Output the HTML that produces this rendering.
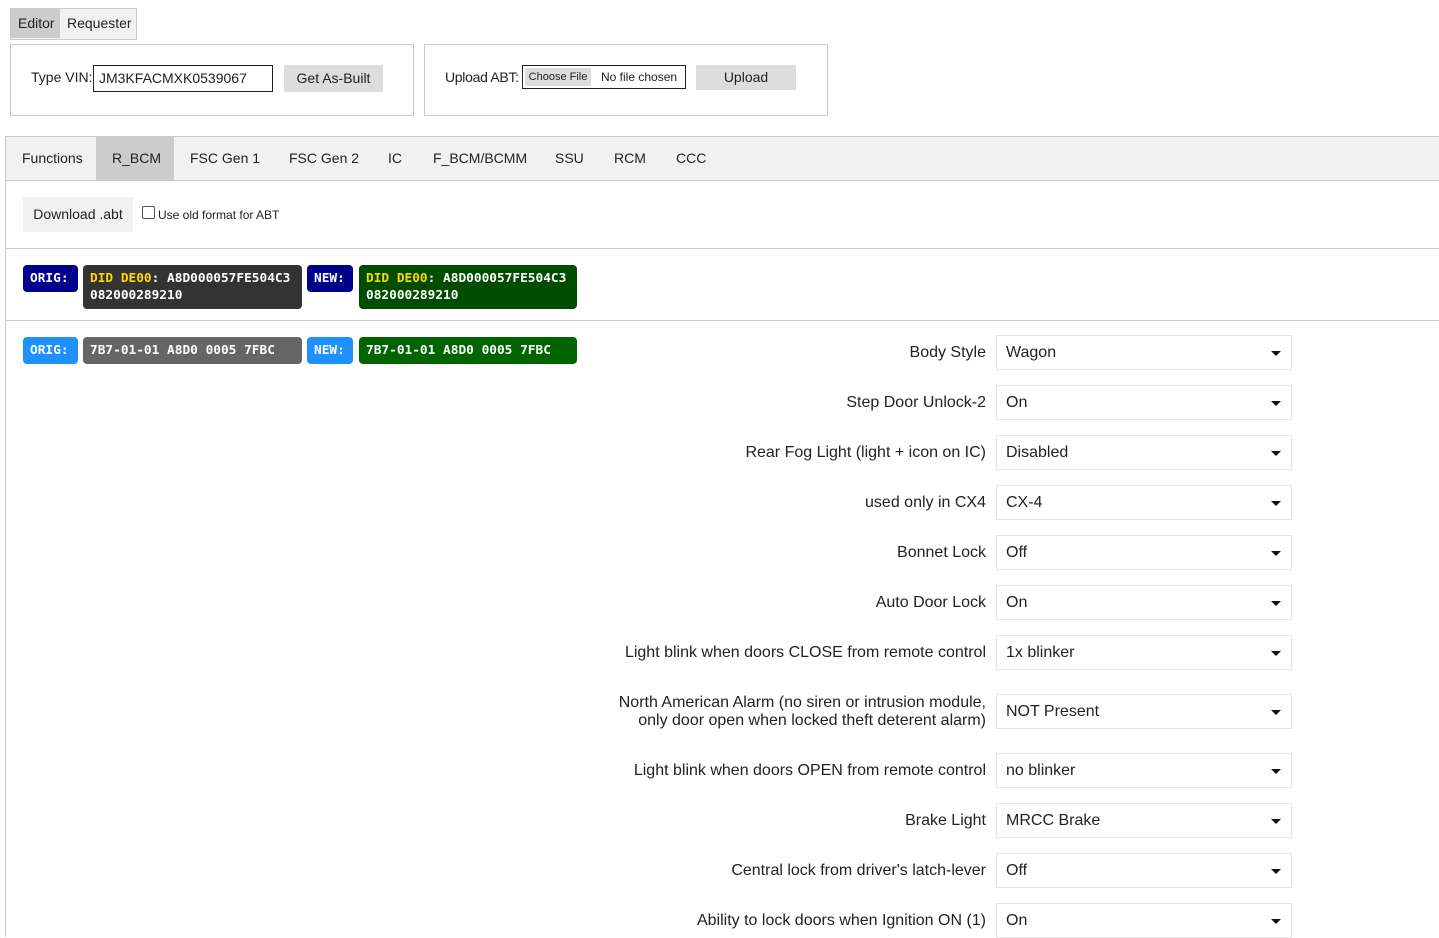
<!DOCTYPE html><html><head><style>
body{margin:0;width:1439px;height:937px;overflow:hidden;background:#fff;font-family:"Liberation Sans",Arial,sans-serif;color:#222;position:relative}
.a{position:absolute}
.box{position:absolute;border:1px solid #ccc;background:#fff}
.btn{position:absolute;background:#ddd;font-size:14px;text-align:center}
.mono{font-family:"DejaVu Sans Mono","Liberation Mono",monospace;font-weight:bold;font-size:12.8px;color:#fff;border-radius:4px;position:absolute;padding:5px 7px;box-sizing:border-box;line-height:17px;white-space:nowrap}
.lbl{position:absolute;right:453px;font-size:16px;text-align:right;line-height:18px}
.sel{position:absolute;left:996px;width:296px;height:35px;border:1px solid #e6e6e6;box-sizing:border-box;font-size:16px;padding-left:9px;line-height:34px}
.sel:after{content:"";position:absolute;right:10px;top:15px;border-left:5px solid transparent;border-right:5px solid transparent;border-top:5px solid #111}
.tab{position:absolute;top:137px;height:43px;line-height:43px;font-size:14px}
</style></head><body>
<div class="a" style="left:10px;top:8px;width:125px;height:30px;border:1px solid #ccc;background:#f1f1f1"></div>
<div class="a" style="left:11px;top:9px;width:49px;height:29px;background:#ccc"></div>
<div class="a" style="left:18px;top:15px;font-size:14px">Editor</div>
<div class="a" style="left:67px;top:15px;font-size:14px">Requester</div>
<div class="box" style="left:10px;top:44px;width:402px;height:70px"></div>
<div class="a" style="left:31px;top:69px;font-size:14px">Type VIN:</div>
<div class="a" style="left:93px;top:65px;border:1px solid #222;font-size:14px;line-height:25px;padding-left:5px;box-sizing:border-box;width:180px;height:27px">JM3KFACMXK0539067</div>
<div class="btn" style="left:284px;top:65px;width:99px;height:27px;line-height:27px">Get As-Built</div>
<div class="box" style="left:424px;top:44px;width:402px;height:70px"></div>
<div class="a" style="left:445px;top:69px;font-size:14px;letter-spacing:-0.3px">Upload ABT:</div>
<div class="a" style="left:522px;top:65px;width:164px;height:24px;border:1px solid #222;box-sizing:border-box"></div>
<div class="a" style="left:525px;top:68px;width:66px;height:18px;background:#ddd;font-size:11px;line-height:18px;text-align:center">Choose File</div>
<div class="a" style="left:601px;top:70px;font-size:12px">No file chosen</div>
<div class="btn" style="left:696px;top:65px;width:100px;height:25px;line-height:25px">Upload</div>
<div class="a" style="left:5px;top:136px;width:1434px;height:43px;background:#f1f1f1;border:1px solid #ccc;border-right:none"></div>
<div class="a" style="left:5px;top:136px;width:1px;height:801px;background:#ccc"></div>
<div class="a" style="left:96px;top:137px;width:78px;height:43px;background:#ccc"></div>
<div class="tab" style="left:22px">Functions</div><div class="tab" style="left:112px">R_BCM</div><div class="tab" style="left:190px">FSC Gen 1</div><div class="tab" style="left:289px">FSC Gen 2</div><div class="tab" style="left:388px">IC</div><div class="tab" style="left:433px">F_BCM/BCMM</div><div class="tab" style="left:555px">SSU</div><div class="tab" style="left:614px">RCM</div><div class="tab" style="left:676px">CCC</div>
<div class="a" style="left:23px;top:197px;width:110px;height:35px;background:#f1f1f1;font-size:14px;line-height:35px;text-align:center">Download .abt</div>
<div class="a" style="left:142px;top:206px;width:11px;height:11px;border:1px solid #555;border-radius:2px"></div>
<div class="a" style="left:158px;top:208px;font-size:12px">Use old format for ABT</div>
<div class="a" style="left:6px;top:248px;width:1433px;height:1px;background:#ccc"></div>
<div class="a" style="left:6px;top:320px;width:1433px;height:1px;background:#ccc"></div>
<div class="mono" style="left:23px;top:265px;width:55px;height:27px;background:#00008b">ORIG:</div>
<div class="mono" style="left:83px;top:265px;width:219px;height:44px;background:#333;white-space:normal"><span style="color:#ffd700">DID DE00</span>: A8D000057FE504C3 082000289210</div>
<div class="mono" style="left:307px;top:265px;width:46px;height:27px;background:#00008b">NEW:</div>
<div class="mono" style="left:359px;top:265px;width:218px;height:44px;background:#004d00;white-space:normal"><span style="color:#ffd700">DID DE00</span>: A8D000057FE504C3 082000289210</div>
<div class="mono" style="left:23px;top:337px;width:55px;height:27px;background:#1e90ff">ORIG:</div>
<div class="mono" style="left:83px;top:337px;width:219px;height:27px;background:#666">7B7-01-01 A8D0 0005 7FBC</div>
<div class="mono" style="left:307px;top:337px;width:46px;height:27px;background:#1e90ff">NEW:</div>
<div class="mono" style="left:359px;top:337px;width:218px;height:27px;background:#006400">7B7-01-01 A8D0 0005 7FBC</div>

<div class="lbl" style="top:344px">Body Style</div><div class="sel" style="top:335px">Wagon</div>
<div class="lbl" style="top:394px">Step Door Unlock-2</div><div class="sel" style="top:385px">On</div>
<div class="lbl" style="top:444px">Rear Fog Light (light + icon on IC)</div><div class="sel" style="top:435px">Disabled</div>
<div class="lbl" style="top:494px">used only in CX4</div><div class="sel" style="top:485px">CX-4</div>
<div class="lbl" style="top:544px">Bonnet Lock</div><div class="sel" style="top:535px">Off</div>
<div class="lbl" style="top:594px">Auto Door Lock</div><div class="sel" style="top:585px">On</div>
<div class="lbl" style="top:644px">Light blink when doors CLOSE from remote control</div><div class="sel" style="top:635px">1x blinker</div>
<div class="lbl" style="top:694px">North American Alarm (no siren or intrusion module,<br>only door open when locked theft deterent alarm)</div><div class="sel" style="top:694px">NOT Present</div>
<div class="lbl" style="top:762px">Light blink when doors OPEN from remote control</div><div class="sel" style="top:753px">no blinker</div>
<div class="lbl" style="top:812px">Brake Light</div><div class="sel" style="top:803px">MRCC Brake</div>
<div class="lbl" style="top:862px">Central lock from driver's latch-lever</div><div class="sel" style="top:853px">Off</div>
<div class="lbl" style="top:912px">Ability to lock doors when Ignition ON (1)</div><div class="sel" style="top:903px">On</div>
</body></html>
